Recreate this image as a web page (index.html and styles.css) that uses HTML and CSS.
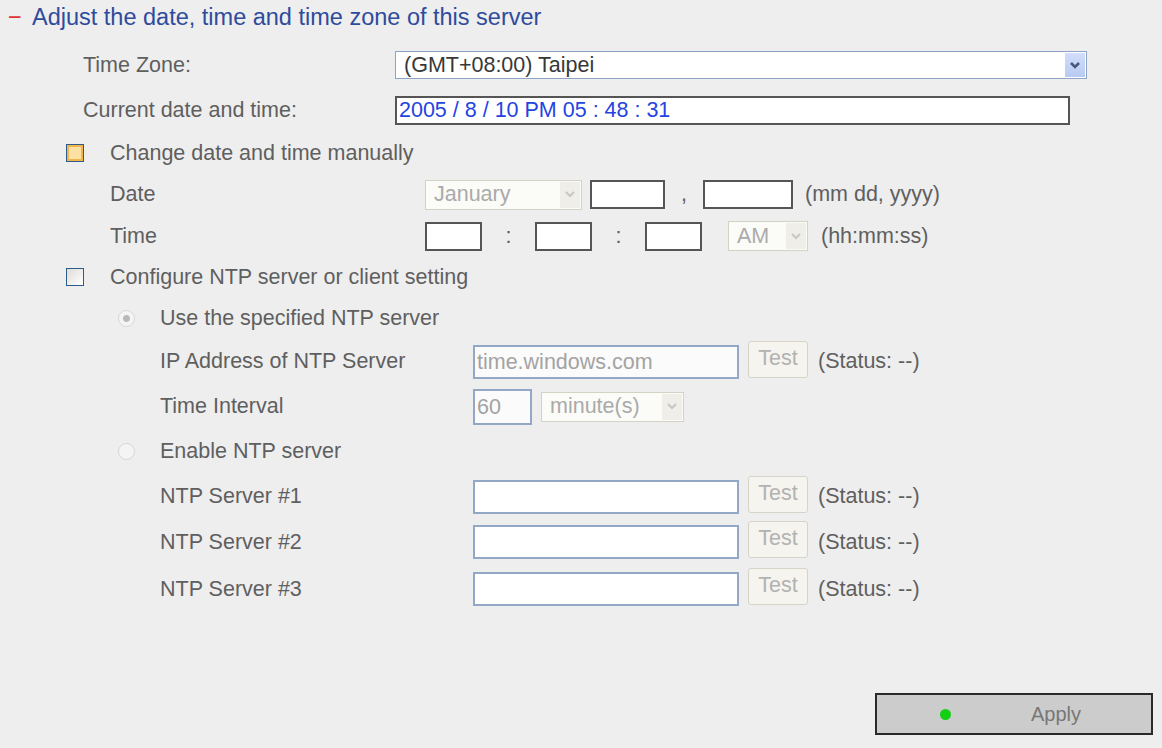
FILE: index.html
```html
<!DOCTYPE html>
<html lang="en">
  <head>
    <meta charset="UTF-8" />
    <title>Date and Time</title>
    <link rel="stylesheet" href="styles.css">
  </head>
  <body>
    <div class="panel">
      <div class="title"><span class="toggle">&minus;</span> Adjust the date, time and time zone of this server</div>

      <div class="row lv1 h46">
        <span class="label">Time Zone:</span>
        <div class="select select-tz">
          <span class="select-text">(GMT+08:00) Taipei</span>
          <span class="arrow arrow-blue">
            <svg width="12" height="9" viewBox="0 0 12 9"><polyline points="2,2 6,6 10,2" fill="none" stroke="#45587e" stroke-width="2.6"/></svg>
          </span>
        </div>
      </div>

      <div class="row lv1 h44">
        <span class="label">Current date and time:</span>
        <div class="box box-now">2005 / 8 / 10 PM 05 : 48 : 31</div>
      </div>

      <div class="row check-row h42">
        <span class="checkbox checkbox-hover"></span>
        <span>Change date and time manually</span>
      </div>

      <div class="row lv2 h41">
        <span class="label">Date</span>
        <div class="select select-off select-month">
          <span class="select-text">January</span>
          <span class="arrow">
            <svg width="12" height="9" viewBox="0 0 12 9"><polyline points="2,2 6,6 10,2" fill="none" stroke="#c8c8c8" stroke-width="2.2"/></svg>
          </span>
        </div>
        <span class="box box-dd"></span>
        <span class="sep sep-comma">,</span>
        <span class="box box-yyyy"></span>
        <span class="hint hint-date">(mm dd, yyyy)</span>
      </div>

      <div class="row lv2 h42">
        <span class="label">Time</span>
        <span class="box box-hh"></span>
        <span class="sep">:</span>
        <span class="box box-hh"></span>
        <span class="sep">:</span>
        <span class="box box-hh"></span>
        <div class="select select-off select-ampm">
          <span class="select-text">AM</span>
          <span class="arrow">
            <svg width="12" height="9" viewBox="0 0 12 9"><polyline points="2,2 6,6 10,2" fill="none" stroke="#c8c8c8" stroke-width="2.2"/></svg>
          </span>
        </div>
        <span class="hint">(hh:mm:ss)</span>
      </div>

      <div class="row check-row h40">
        <span class="checkbox"></span>
        <span>Configure NTP server or client setting</span>
      </div>

      <div class="row radio-row h42">
        <span class="radio radio-on"></span>
        <span>Use the specified NTP server</span>
      </div>

      <div class="row lv3 h45">
        <span class="label">IP Address of NTP Server</span>
        <span class="field field-ntp field-off">time.windows.com</span>
        <span class="btn-test">Test</span>
        <span class="status">(Status: --)</span>
      </div>

      <div class="row lv3 h45">
        <span class="label">Time Interval</span>
        <span class="field field-min field-off">60</span>
        <div class="select select-off select-unit">
          <span class="select-text">minute(s)</span>
          <span class="arrow">
            <svg width="12" height="9" viewBox="0 0 12 9"><polyline points="2,2 6,6 10,2" fill="none" stroke="#c8c8c8" stroke-width="2.2"/></svg>
          </span>
        </div>
      </div>

      <div class="row radio-row h45">
        <span class="radio"></span>
        <span>Enable NTP server</span>
      </div>

      <div class="row lv3 h45">
        <span class="label">NTP Server #1</span>
        <span class="field field-ntp"></span>
        <span class="btn-test">Test</span>
        <span class="status">(Status: --)</span>
      </div>

      <div class="row lv3 h46">
        <span class="label">NTP Server #2</span>
        <span class="field field-ntp"></span>
        <span class="btn-test">Test</span>
        <span class="status">(Status: --)</span>
      </div>

      <div class="row lv3 h48">
        <span class="label">NTP Server #3</span>
        <span class="field field-ntp"></span>
        <span class="btn-test">Test</span>
        <span class="status">(Status: --)</span>
      </div>

      <div class="actions">
        <button class="btn-apply"><span class="dot"></span><span class="apply-text">Apply</span></button>
      </div>
    </div>
  </body>
</html>
```

FILE: styles.css
```css
body {
  margin: 0;
  background: #eeeeee;
  font-family: "Liberation Sans", Arial, sans-serif;
  font-size: 21.5px;
  color: #5f5f5f;
}
.panel {
  height: 748px;
  overflow: hidden;
}
.title {
  height: 34px;
  line-height: 34px;
  margin-bottom: 8px;
  padding-left: 8px;
  font-size: 23.5px;
  color: #2f4b9c;
  white-space: nowrap;
}
.toggle {
  color: #e23131;
  margin-right: 5px;
}
.row {
  display: flex;
  align-items: center;
  white-space: nowrap;
}
.h40 { height: 40px; }
.h41 { height: 41px; }
.h42 { height: 42px; }
.h44 { height: 44px; }
.h45 { height: 45px; }
.h46 { height: 46px; }
.h48 { height: 48px; }
.label {
  flex: none;
}
.lv1 { padding-left: 83px; }
.lv1 .label { width: 312px; }
.lv2 { padding-left: 110px; }
.lv2 .label { width: 315px; }
.lv3 { padding-left: 160px; }
.lv3 .label { width: 313px; }
.check-row { padding-left: 66px; }
.radio-row { padding-left: 118px; }

/* drop-down lists */
.select {
  display: flex;
  align-items: center;
  box-sizing: border-box;
  background: #fff;
  border: 1px solid #8ea4c4;
}
.select-text {
  flex: 1;
  padding-left: 8px;
}
.arrow {
  display: flex;
  align-items: center;
  justify-content: center;
  width: 20px;
  align-self: stretch;
  margin: 1px;
  background: #efeee8;
}
.arrow-blue {
  background: linear-gradient(#d2defa, #b8caf3);
}
.select-tz {
  width: 692px;
  height: 28px;
  color: #383838;
}
.select-off {
  height: 30px;
  background: #fbfbf8;
  border-color: #d4d2c4;
  color: #aaa;
}
.select-month { width: 157px; margin-right: 8px; }
.select-ampm { width: 80px; margin-left: 26px; margin-right: 13px; }
.select-unit { width: 143px; margin-left: 9px; }

/* text boxes */
.box {
  display: block;
  box-sizing: border-box;
  height: 29px;
  background: #fff;
  border: 2px solid #555;
}
.box-now {
  width: 675px;
  line-height: 25px;
  padding-left: 2px;
  color: #2443e2;
}
.box-dd { width: 75px; }
.box-yyyy { width: 90px; }
.box-hh { width: 57px; }
.sep {
  width: 53px;
  text-align: center;
}
.sep-comma { width: 38px; }
.hint-date { margin-left: 12px; }

.field {
  display: block;
  box-sizing: border-box;
  height: 34px;
  line-height: 30px;
  background: #fff;
  border: 2px solid #93a8c6;
  padding-left: 2px;
}
.field-off { color: #a3a3a3; background: #fbfbfb; }
.field-ntp { width: 266px; }
.field-min { width: 59px; height: 36px; line-height: 32px; }

.btn-test {
  display: block;
  box-sizing: border-box;
  width: 60px;
  height: 37px;
  margin: -5px 10px 0 9px;
  line-height: 33px;
  text-align: center;
  background: #f5f4ef;
  border: 1px solid #d6d4c8;
  border-radius: 3px;
  color: #b2b2b2;
}

/* check boxes and radios */
.checkbox {
  flex: none;
  box-sizing: border-box;
  width: 18px;
  height: 18px;
  margin-right: 26px;
  border: 1px solid #2b5a8c;
  background: linear-gradient(135deg, #dedcd6, #ffffff);
}
.checkbox-hover {
  background: #fbe2a4;
  box-shadow: inset 0 0 0 2px #f3b44c;
}
.radio {
  flex: none;
  box-sizing: border-box;
  width: 17px;
  height: 17px;
  margin-right: 25px;
  border-radius: 50%;
  border: 1px solid #d6d6d6;
  background: #f4f4f4;
}
.radio-on {
  background: radial-gradient(circle, #b8b8b8 0 3px, #f4f4f4 4px);
}

/* apply */
.actions {
  display: flex;
  justify-content: flex-end;
  padding: 80px 9px 0 0;
}
.btn-apply {
  display: flex;
  align-items: center;
  width: 278px;
  height: 42px;
  padding: 0;
  background: #cccccc;
  border: 2px solid #2a2a2a;
  font-family: inherit;
  font-size: 20px;
  color: #777;
}
.dot {
  width: 11px;
  height: 11px;
  margin-left: 63px;
  border-radius: 50%;
  background: #14d014;
}
.apply-text {
  margin-left: 80px;
}
```
